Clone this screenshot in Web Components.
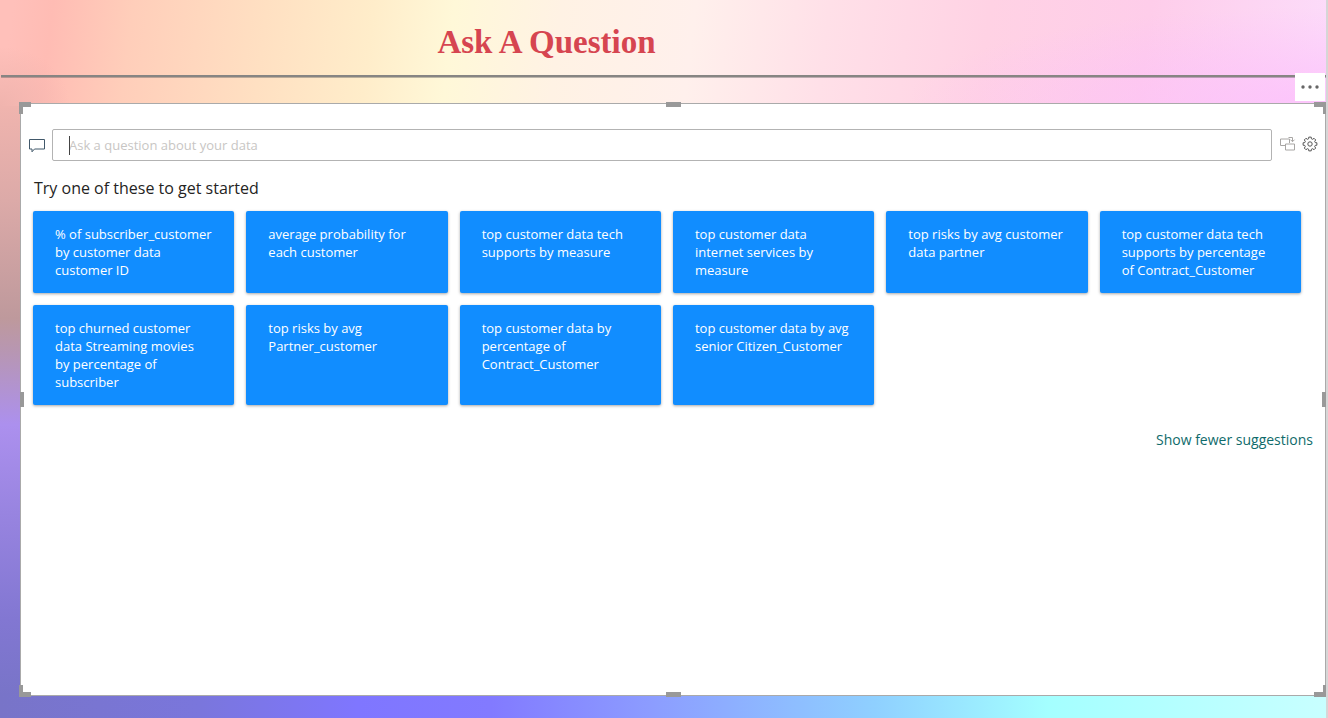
<!DOCTYPE html>
<html lang="en">
<head>
<meta charset="utf-8">
<title>Ask A Question</title>
<style>
  html, body { margin: 0; min-height: 100%; }
  body { font-family: "Open Sans", "Noto Sans", sans-serif; }
</style>
</head>
<body>
<report-page>
  <page-title slot="header">Ask A Question</page-title>
  <qna-visual></qna-visual>
</report-page>

<script>
function attach(host, html) {
  const t = document.createElement('template');
  t.innerHTML = html;
  const root = host.attachShadow({ mode: 'open' });
  root.appendChild(t.content.cloneNode(true));
  return root;
}

customElements.define('report-page', class extends HTMLElement {
  constructor() {
    super();
    attach(this, `
      <style>
        :host {
          display: flex; flex-direction: column; box-sizing: border-box;
          min-height: 100vh; padding: 0 0 22px 20px;
          border-right: 2px solid #d6d6d6;
          background:
            linear-gradient(90deg, #7874c8, #7a76dc 15%, #7f76ff 27%, #827aff 37%, #8c9cff 49%, #8fd0ff 66%, #a4ffff 79%, #c8ffff) left bottom / 100% 24px no-repeat,
            linear-gradient(180deg, #f0b4ae, #dcaaa8 16%, #be999c 36%, #b796b4 42%, #ac90ee 54%, #9884e0 69%, #8277d2 87%, #7874c8) left 106px / 22px calc(100% - 128px) no-repeat,
            radial-gradient(70px 60px at 0 106px, #f0b4ae, rgba(255,184,176,0)) left top / 100% 106px no-repeat,
            radial-gradient(420px 100px at 100% 106px, rgba(252,190,252,.8), rgba(253,195,250,0)) left top / 100% 106px no-repeat,
            linear-gradient(97deg, #ffc0ba 1%, #ffbcb4 4%, #ffceba 10%, #ffe0c2 20%, #ffedca 28%, #fff8d8 34%, #fff2e4 42%, #fff0ec 52%, #ffe0e8 62%, #ffd2e4 74%, #fecdea 86%, #fcdcfa) left top / 100% 106px no-repeat,
            #fff;
          background-origin: padding-box;
        }
        header { margin-left: -20px; }
        main { flex: 1; display: flex; margin-top: 26px; }
        ::slotted(qna-visual) { flex: 1; }
      </style>
      <header><slot name="header"></slot></header>
      <main><slot></slot></main>`);
  }
});

customElements.define('page-title', class extends HTMLElement {
  constructor() {
    super();
    attach(this, `
      <style>
        :host { display: block; margin-left: 1px; border-bottom: 2px solid #878583; box-shadow: 0 1px rgba(90,90,90,.4); }
        h1 {
          margin: 0; padding: 24px 234px 15px 0; text-align: center;
          font: bold 33px/36px "Liberation Serif", "Times New Roman", serif; color: #d64550;
        }
      </style>
      <h1><slot></slot></h1>`);
  }
});

customElements.define('suggestion-card', class extends HTMLElement {
  constructor() {
    super();
    attach(this, `
      <style>
        :host { display: flex; }
        button {
          flex: 1; display: flex; align-items: flex-start; border: 0; border-radius: 2px;
          padding: 14px 12px 14px 22px; background: #118dff; color: #fff; text-align: left;
          font: 13px/18px "Open Sans", "Noto Sans", sans-serif; white-space: pre-line;
          box-shadow: 0 1px 3px rgba(0,0,0,.35); cursor: pointer;
        }
      </style>
      <button type="button"><slot></slot></button>`);
  }
});

customElements.define('resize-frame', class extends HTMLElement {
  constructor() {
    super();
    attach(this, `
      <style>
        :host { position: absolute; inset: -2px -1px -2px -2px; pointer-events: none; }
        i { position: absolute; box-sizing: border-box; border: 0 solid #999; }
        .tl, .tr, .bl, .br { width: 12px; height: 12px; }
        .tl { left: 0; top: 0; border-width: 5px 0 0 4px; }
        .tr { right: 0; top: 0; border-width: 5px 3px 0 0; }
        .bl { left: 0; bottom: 0; border-width: 0 0 5px 4px; }
        .br { right: 0; bottom: 0; border-width: 0 3px 5px 0; }
        .t, .b { left: calc(50% - 7px); width: 15px; height: 5px; background: #999; }
        .t { top: 0; } .b { bottom: 0; }
        .l, .r { top: calc(50% - 8px); width: 4px; height: 15px; background: #999; }
        .l { left: 1px; } .r { right: 0; }
      </style>
      <i class="tl"></i><i class="tr"></i><i class="bl"></i><i class="br"></i>
      <i class="t"></i><i class="b"></i><i class="l"></i><i class="r"></i>`);
  }
});

customElements.define('question-box', class extends HTMLElement {
  constructor() {
    super();
    attach(this, `
      <style>
        :host { display: flex; align-items: center; }
        label { display: flex; width: 23px; }
        .field { position: relative; flex: 1; display: flex; margin-right: 8px; }
        .field::before { content: ""; position: absolute; left: 17px; top: 7px; width: 1px; height: 19px; background: #444; }
        input {
          flex: 1; min-width: 0; height: 32px; box-sizing: border-box; padding: 0 16px;
          border: 1px solid #b3b3b3; border-radius: 2px; background: #fff; outline: 0;
          font: 13px/18px "Open Sans", "Noto Sans", sans-serif; color: #252423;
        }
        input::placeholder { color: #c8c6c4; opacity: 1; }
        button { display: flex; border: 0; padding: 0; margin: 0 0 2px 6px; background: none; cursor: pointer; }
        .field + button { margin-left: 0; }
        svg { display: block; }
      </style>
      <label for="q" aria-label="Question">
        <svg width="16" height="16" viewBox="0 0 16 16" fill="none" stroke="#41586a"><path d="M.5 2.500h15v9.500H5.500L3 14.800V12H.5z"/></svg>
      </label>
      <div class="field"><input id="q" type="text" placeholder="Ask a question about your data"></div>
      <button type="button" aria-label="Convert to visual">
        <svg width="16" height="16" viewBox="0 0 16 16" fill="none" stroke="#a8a6a4">
          <path d="M5.500 9.500H.5v-6.500H9.500v4M5.500 8h9v6h-9zM8.500 1.500h4v4M10.500 3.700l2 2 2-2"/>
        </svg>
      </button>
      <button type="button" aria-label="Settings">
        <svg width="16" height="16" viewBox="0 0 16 16" fill="none" stroke="#555" stroke-linejoin="round">
          <path id="gear"/><circle cx="8" cy="8" r="2.200"/>
        </svg>
      </button>`);
    // Eight teeth around a ring, each with a flat tip.
    const pts = [];
    for (let i = 0; i < 8; i++) {
      for (const [off, r] of [[-15, 5.4], [-10, 7], [10, 7], [15, 5.4]]) {
        const a = (i * 45 + off) * Math.PI / 180;
        pts.push((8 + r * Math.cos(a)).toFixed(2) + ' ' + (8 + r * Math.sin(a)).toFixed(2));
      }
    }
    this.shadowRoot.getElementById('gear').setAttribute('d', 'M' + pts.join('L') + 'Z');
  }
});

customElements.define('qna-visual', class extends HTMLElement {
  constructor() {
    super();
    const cards = [
      '% of subscriber_customer\nby customer data\ncustomer ID',
      'average probability for\neach customer',
      'top customer data tech\nsupports by measure',
      'top customer data\ninternet services by\nmeasure',
      'top risks by avg customer\ndata partner',
      'top customer data tech\nsupports by percentage\nof Contract_Customer',
      'top churned customer\ndata Streaming movies\nby percentage of\nsubscriber',
      'top risks by avg\nPartner_customer',
      'top customer data by\npercentage of\nContract_Customer',
      'top customer data by avg\nsenior Citizen_Customer'
    ];
    attach(this, `
      <style>
        :host {
          position: relative; display: block; box-sizing: border-box;
          border: 1px solid #aaa; background: #fff; padding: 25px 7px 16px 8px;
        }
        .more {
          position: absolute; right: 0; top: -31px; width: 30px; height: 28px;
          display: flex; align-items: center; justify-content: center;
          border: 0; padding: 0; background: #fff; cursor: pointer;
        }
        h2 { margin: 16px 0 12px 5px; font-size: 16px; line-height: 22px; font-weight: 400; color: #252423; }
        .grid { display: grid; grid-template-columns: repeat(6, 1fr); gap: 12px; margin: 0 17px 0 4px; }
        .foot { display: flex; justify-content: flex-end; margin: 25px 5px 0 0; }
        a { font-size: 14px; line-height: 20px; color: #0f6b6b; text-decoration: none; }
      </style>
      <button class="more" type="button" aria-label="More options">
        <svg width="20" height="6" viewBox="0 0 20 6" fill="#666"><circle cx="3" cy="3" r="1.700"/><circle cx="10" cy="3" r="1.700"/><circle cx="17" cy="3" r="1.700"/></svg>
      </button>
      <question-box></question-box>
      <h2>Try one of these to get started</h2>
      <div class="grid">${cards.map(c => `<suggestion-card>${c}</suggestion-card>`).join('')}</div>
      <div class="foot"><a href="#">Show fewer suggestions</a></div>
      <resize-frame></resize-frame>`);
  }
});
</script>
</body>
</html>
